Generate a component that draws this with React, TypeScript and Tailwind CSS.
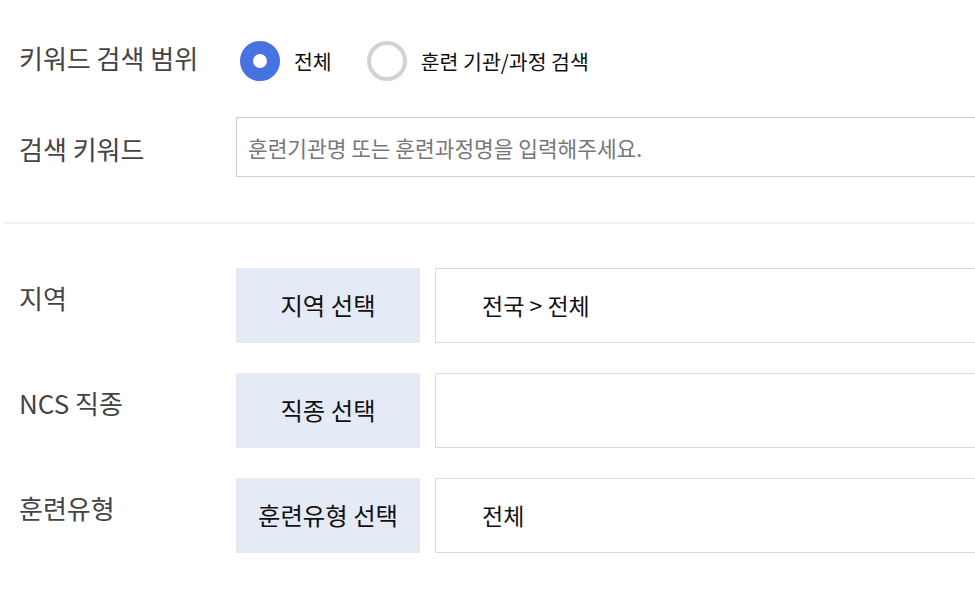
const font = { fontFamily: '"Noto Sans CJK KR", "Noto Sans", sans-serif' };

function Radio({ checked, label }: { checked: boolean; label: string }) {
  return (
    <label className="flex items-center gap-[14px] cursor-pointer">
      <span
        className={
          checked
            ? 'w-[40px] h-[40px] rounded-full border-[13px] border-[#4673e0] bg-white box-border'
            : 'w-[40px] h-[40px] rounded-full border-[4px] border-[#d2d2d6] bg-white box-border'
        }
      />
      <span className="text-[20.5px] text-[#111]">{label}</span>
    </label>
  );
}

function SelectRow({ label, button, value }: { label: string; button: string; value: string }) {
  return (
    <div className="flex items-start">
      <div className="w-[217px] pt-[10px] text-[26px] text-[#444]">{label}</div>
      <button className="w-[184px] h-[75px] bg-[#e4ebf6] text-[24.4px] text-[#111] shrink-0">{button}</button>
      <div className="ml-[15px] flex-1 h-[75px] border border-[#dcdcdc] border-r-0 flex items-center pl-[46px] text-[23px] text-[#111]">
        {value}
      </div>
    </div>
  );
}

export default function App() {
  return (
    <div className="w-[975px] h-[591px] bg-white overflow-hidden" style={font}>
      <div className="pl-[19px] pt-[38px]">
        <div className="flex items-center h-[46px]">
          <div className="w-[217px] pb-[8px] text-[26px] text-[#444]">키워드 검색 범위</div>
          <div className="flex items-center gap-[35px] pl-[4px]">
            <Radio checked label="전체" />
            <Radio checked={false} label="훈련 기관/과정 검색" />
          </div>
        </div>
        <div className="flex items-center mt-[33px]">
          <div className="w-[217px] pt-[2px] text-[26px] text-[#444]">검색 키워드</div>
          <input
            className="flex-1 h-[60px] border border-[#cccccc] border-r-0 px-[11px] text-[21.4px] outline-none placeholder:text-[#777]"
            placeholder="훈련기관명 또는 훈련과정명을 입력해주세요."
          />
        </div>
      </div>
      <div className="mt-[45px] ml-[3px] h-[2px] bg-[#f1f1f1]" />
      <div className="pl-[19px] mt-[44px] flex flex-col gap-[30px]">
        <SelectRow label="지역" button="지역 선택" value="전국 > 전체" />
        <SelectRow label="NCS 직종" button="직종 선택" value="" />
        <SelectRow label="훈련유형" button="훈련유형 선택" value="전체" />
      </div>
    </div>
  );
}
